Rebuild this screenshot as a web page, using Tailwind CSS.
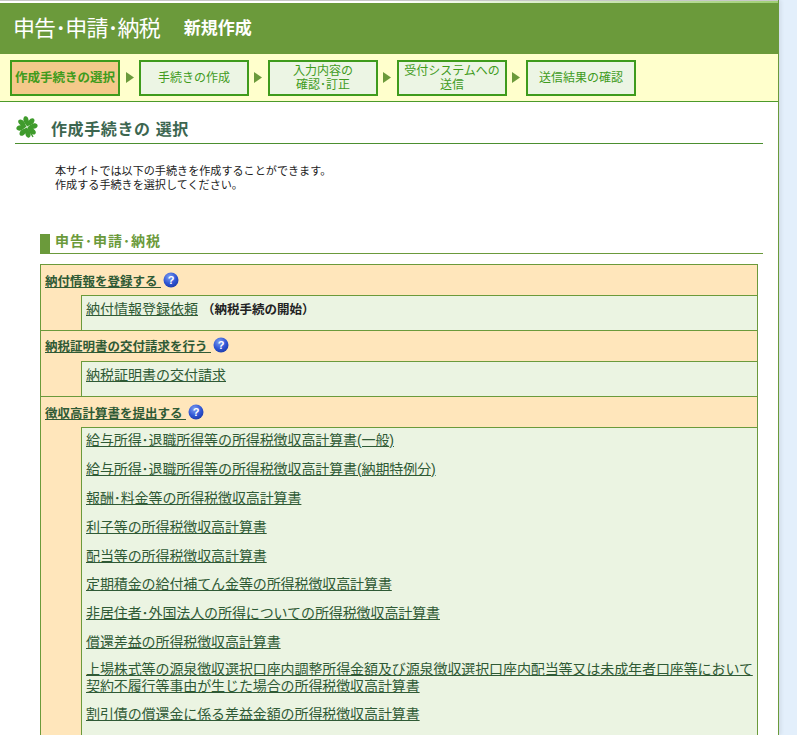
<!DOCTYPE html>
<html lang="ja">
<head>
    <meta charset="UTF-8">
    <title>申告・申請・納税 新規作成</title>
    <script src="https://cdn.jsdelivr.net/npm/@tailwindcss/browser@4"></script>
</head>
<body class="h-[735px] overflow-hidden bg-[#e3effb] font-['Liberation_Sans','Noto_Sans_CJK_JP',sans-serif]">
    <svg class="absolute w-0 h-0">
        <defs>
            <radialGradient id="qball" cx="40%" cy="30%" r="75%">
                <stop offset="0" stop-color="#7f9ff2"/>
                <stop offset="0.6" stop-color="#2f55d4"/>
                <stop offset="1" stop-color="#1c3aa8"/>
            </radialGradient>
        </defs>
    </svg>
    <div class="w-[779px] h-[735px] overflow-hidden bg-white border-r border-[#6b9a3b] shadow-[2px_0_4px_rgba(0,0,0,0.08)]">
        <div class="h-[3px] bg-linear-to-r from-white from-50% to-[#a0cf74] border-t border-t-[#c8c8c8]"></div>
        <!-- header -->
        <div class="h-[51px] bg-[#6b9a3b] flex items-center pl-[13px] text-white">
            <h1 class="text-[22px] leading-[28px] tracking-[-0.9px]">申告･申請･納税</h1>
            <p class="ml-[24px] text-[17px] font-bold leading-[28px] mt-[1px]">新規作成</p>
        </div>
        <!-- steps -->
        <div class="h-[48px] bg-[#ffffcc] border-b border-[#4c9a2a] flex items-center pl-[10px] text-[12px] leading-[14px] text-[#3f9b1c]">
            <div class="w-[110px] h-[36px] border-[2px] border-[#3f9b1c] bg-[#f4c98a] flex items-center justify-center font-bold text-[12.5px] whitespace-nowrap">作成手続きの選択</div>
            <svg class="w-[9px] h-[11px] ml-[6px] mr-[4px]" viewBox="0 0 9 11"><path d="M0 0 L8 5.5 L0 11Z" fill="#6b9a3b"/></svg>
            <div class="w-[110px] h-[36px] border-[2px] border-[#3f9b1c] bg-[#ecf5e4] flex items-center justify-center">手続きの作成</div>
            <svg class="w-[9px] h-[11px] ml-[5px] mr-[5px]" viewBox="0 0 9 11"><path d="M0 0 L8 5.5 L0 11Z" fill="#6b9a3b"/></svg>
            <div class="w-[110px] h-[36px] border-[2px] border-[#3f9b1c] bg-[#ecf5e4] flex items-center justify-center text-center">入力内容の<br>確認･訂正</div>
            <svg class="w-[9px] h-[11px] ml-[5px] mr-[5px]" viewBox="0 0 9 11"><path d="M0 0 L8 5.5 L0 11Z" fill="#6b9a3b"/></svg>
            <div class="w-[110px] h-[36px] border-[2px] border-[#3f9b1c] bg-[#ecf5e4] flex items-center justify-center text-center">受付システムへの<br>送信</div>
            <svg class="w-[9px] h-[11px] ml-[5px] mr-[5px]" viewBox="0 0 9 11"><path d="M0 0 L8 5.5 L0 11Z" fill="#6b9a3b"/></svg>
            <div class="w-[110px] h-[36px] border-[2px] border-[#3f9b1c] bg-[#ecf5e4] flex items-center justify-center">送信結果の確認</div>
        </div>
        <!-- page title -->
        <div class="ml-[15px] w-[748px] h-[42px] border-b border-[#4c8f2f] flex items-center pl-[1px] pt-[12px]">
            <svg class="w-[22px] h-[22px] mb-[3px]" viewBox="-11 -11 22 22">
                <path d="M1 1 L6 10" stroke="#3f9b2c" stroke-width="1.4"/>
                <g fill="#3f9b2c">
                    <path transform="rotate(15)" d="M0 -0.5 C-2 -2.5 -6 -4 -5.6 -8 C-5.2 -10.8 -1.5 -11 0 -6.5 C1.5 -11 5.2 -10.8 5.6 -8 C6 -4 2 -2.5 0 -0.5Z"/>
                    <path transform="rotate(105)" d="M0 -0.5 C-2 -2.5 -6 -4 -5.6 -8 C-5.2 -10.8 -1.5 -11 0 -6.5 C1.5 -11 5.2 -10.8 5.6 -8 C6 -4 2 -2.5 0 -0.5Z"/>
                    <path transform="rotate(195)" d="M0 -0.5 C-2 -2.5 -6 -4 -5.6 -8 C-5.2 -10.8 -1.5 -11 0 -6.5 C1.5 -11 5.2 -10.8 5.6 -8 C6 -4 2 -2.5 0 -0.5Z"/>
                    <path transform="rotate(285)" d="M0 -0.5 C-2 -2.5 -6 -4 -5.6 -8 C-5.2 -10.8 -1.5 -11 0 -6.5 C1.5 -11 5.2 -10.8 5.6 -8 C6 -4 2 -2.5 0 -0.5Z"/>
                </g>
            </svg>
            <h2 class="ml-[13px] mt-[3px] text-[16px] font-bold text-[#3c6650] tracking-[0.6px] leading-[22px]">作成手続きの 選択</h2>
        </div>
        <!-- intro -->
        <div class="mt-[20px] ml-[55px] text-[11.1px] leading-[14px] text-[#222]">
            <p>本サイトでは以下の手続きを作成することができます。</p>
            <p>作成する手続きを選択してください。</p>
        </div>
        <!-- section -->
        <div class="mt-[42px] ml-[40px] w-[723px] h-[20px] border-b border-[#6b9a3b] flex">
            <div class="w-[10px] bg-[#6b9a3b]"></div>
            <h3 class="ml-[5px] text-[14px] tracking-[1px] font-bold text-[#6b9a3b] leading-[14px]">申告･申請･納税</h3>
        </div>
        <!-- list -->
        <div class="mt-[10px] ml-[40px] w-[718px] border border-[#6b9a3b] bg-[#ffe6bb] text-[#2f5a35]">
            <h4 class="h-[30px] pl-[4px] flex items-center text-[12.5px] font-bold pt-[5px]">
                <a href="#" class="underline">納付情報を登録する&nbsp;</a>
                <svg class="w-[16px] h-[16px] ml-[2px] mb-[6px]" viewBox="0 0 16 16">
                    <circle cx="8" cy="8" r="7.5" fill="url(#qball)"/><text x="8" y="12" text-anchor="middle" font-size="11" font-weight="bold" fill="#fff">?</text>
                </svg>
            </h4>
            <div class="ml-[40px] h-[35px] bg-[#ebf4e2] border-l border-t border-[#6b9a3b] pl-[4px] pt-[3px] text-[14px] leading-[20px]">
                <a href="#" class="underline">納付情報登録依頼</a>
                <span class="text-[12.5px] font-bold text-[#222]">（納税手続の開始）</span>
            </div>
            <h4 class="h-[31px] pl-[4px] flex items-center text-[12.5px] font-bold pt-[3px] border-t border-[#6b9a3b]">
                <a href="#" class="underline">納税証明書の交付請求を行う&nbsp;</a>
                <svg class="w-[16px] h-[16px] ml-[2px] mb-[6px]" viewBox="0 0 16 16">
                    <circle cx="8" cy="8" r="7.5" fill="url(#qball)"/><text x="8" y="12" text-anchor="middle" font-size="11" font-weight="bold" fill="#fff">?</text>
                </svg>
            </h4>
            <div class="ml-[40px] h-[35px] bg-[#ebf4e2] border-l border-t border-[#6b9a3b] pl-[4px] pt-[3px] text-[14px] leading-[20px]">
                <a href="#" class="underline">納税証明書の交付請求</a>
            </div>
            <h4 class="h-[31px] pl-[4px] flex items-center text-[12.5px] font-bold pt-[5px] border-t border-[#6b9a3b]">
                <a href="#" class="underline">徴収高計算書を提出する&nbsp;</a>
                <svg class="w-[16px] h-[16px] ml-[2px] mb-[6px]" viewBox="0 0 16 16">
                    <circle cx="8" cy="8" r="7.5" fill="url(#qball)"/><text x="8" y="12" text-anchor="middle" font-size="11" font-weight="bold" fill="#fff">?</text>
                </svg>
            </h4>
            <ul class="ml-[40px] bg-[#ebf4e2] border-l border-t border-[#6b9a3b] pl-[4px] pt-[2px] pb-[40px] text-[14px] leading-[20px] tracking-[-0.1px] flex flex-col gap-[8.9px]">
                <li><a href="#" class="underline">給与所得･退職所得等の所得税徴収高計算書(一般)</a></li>
                <li><a href="#" class="underline">給与所得･退職所得等の所得税徴収高計算書(納期特例分)</a></li>
                <li><a href="#" class="underline">報酬･料金等の所得税徴収高計算書</a></li>
                <li><a href="#" class="underline">利子等の所得税徴収高計算書</a></li>
                <li><a href="#" class="underline">配当等の所得税徴収高計算書</a></li>
                <li><a href="#" class="underline">定期積金の給付補てん金等の所得税徴収高計算書</a></li>
                <li><a href="#" class="underline">非居住者･外国法人の所得についての所得税徴収高計算書</a></li>
                <li><a href="#" class="underline">償還差益の所得税徴収高計算書</a></li>
                <li class="leading-[17px] whitespace-nowrap"><a href="#" class="underline">上場株式等の源泉徴収選択口座内調整所得金額及び源泉徴収選択口座内配当等又は未成年者口座等において<br>契約不履行等事由が生じた場合の所得税徴収高計算書</a></li>
                <li><a href="#" class="underline">割引債の償還金に係る差益金額の所得税徴収高計算書</a></li>
            </ul>
        </div>
    </div>
</body>
</html>
